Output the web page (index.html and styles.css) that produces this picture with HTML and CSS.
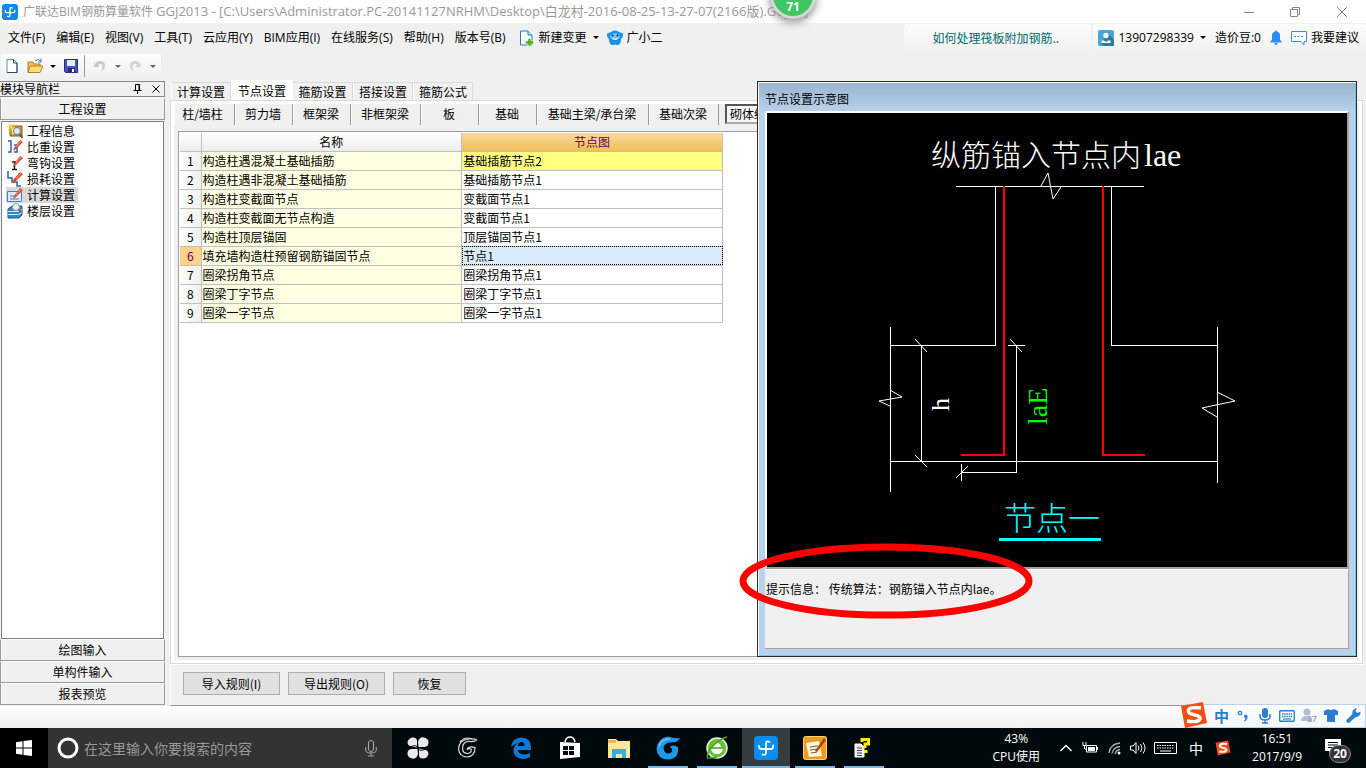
FILE: index.html
```html
<!DOCTYPE html>
<html lang="zh-CN">
<head>
<meta charset="utf-8">
<title>广联达BIM钢筋算量软件 GGJ2013</title>
<link rel="stylesheet" href="styles.css">
</head>
<body>
<header class="titlebar">
  <svg class="app-icon" viewBox="0 0 24 24"><rect width="24" height="24" rx="5" fill="#0a8bea"/><path d="M15.500 6Q12 4 12 8V16Q12 20 8.500 18.500M5 10Q4.500 13 8 13H16Q20 13 19 9.500" fill="none" stroke="#fff" stroke-width="2" stroke-linecap="round"/></svg>
  <h1 class="title">广联达BIM钢筋算量软件 <span>GGJ2013 - [C:\Users\Administrator.PC-20141127NRHM\Desktop\白龙村-2016-08-25-13-27-07(2166版).GGJ12]</span></h1>
  <div class="window-buttons">
    <button aria-label="最小化"><svg viewBox="0 0 10 10"><path d="M0 5.500H10"/></svg></button>
    <button aria-label="还原"><svg viewBox="0 0 10 10"><path d="M.5 2.500H7.500V9.500H.5ZM2.500 2.500V.5H9.500V7.500H7.500"/></svg></button>
    <button aria-label="关闭"><svg viewBox="0 0 10 10"><path d="M0 0L10 10M10 0L0 10"/></svg></button>
  </div>
  <span class="score">71</span>
</header>

<nav class="menubar">
  <button>文件(F)</button><button>编辑(E)</button><button>视图(V)</button><button>工具(T)</button><button>云应用(Y)</button><button>BIM应用(I)</button><button>在线服务(S)</button><button>帮助(H)</button><button>版本号(B)</button>
  <button class="with-icon"><svg class="i16" viewBox="0 0 16 16"><path d="M1.500 1H9l4 4v10H1.500Z" fill="#f6fbff" stroke="#2b79b9"/><path d="M9 1v4h4" fill="#cfe6f7" stroke="#2b79b9"/><path d="M9 8.500h3v2.500h2.500v3H12v2H9v-2H6.500v-3H9Z" fill="#4fb31c" stroke="#fff" stroke-width=".5"/></svg>新建变更<i class="caret"></i></button>
  <button class="with-icon"><svg class="i16" viewBox="0 0 16 16"><path d="M3 2.500Q8-1.500 13 2.500l3 1q.5 3.500-2 5.500.5 4-2.500 6H9.500L8 14.500 6.500 15h-2Q1.500 13 2 9-.5 7 0 3.500Z" fill="#1593e6"/><ellipse cx="8" cy="6.500" rx="5" ry="3.300" fill="#6fc6ff"/><circle cx="5.500" cy="5.500" r="1" fill="#124"/><circle cx="10.500" cy="5.500" r="1" fill="#124"/><path d="M5 8.500q3 2 6 0" stroke="#fff" fill="none"/></svg>广小二</button>
  <div class="help-link"><a href="#">如何处理筏板附加钢筋..</a></div>
  <div class="account">
    <button class="with-icon"><svg class="i16" viewBox="0 0 16 16"><rect width="16" height="16" rx="2" fill="#4aa5d3"/><path d="M10 3l6 7v6H6l-3-3Z" fill="#35779b"/><circle cx="8" cy="5.500" r="2.700" fill="#fff"/><path d="M3.500 13V10.500H6l2 1.500 2-1.500h2.500V13Z" fill="#fff"/></svg>13907298339<i class="caret"></i></button>
    <span>造价豆:0</span>
    <svg class="bell" viewBox="0 0 12 16"><path d="M6 0l1 1.500q3 .8 3 4v4l2 3H0l2-3v-4q0-3.200 3-4ZM4 13h4L6 15.500Z" fill="#2e8bf7"/></svg>
    <button class="with-icon"><svg class="i16" viewBox="0 0 16 16"><path d="M.5 1.500h15v10H13v3.500l-3-3.500H.5Z" fill="#fff" stroke="#2e8bf7"/><path d="M3 6.500h2m1.500 0h2m1.500 0h2" stroke="#2e8bf7"/></svg>我要建议</button>
  </div>
</nav>

<div class="toolbar">
  <div class="tools">
    <button aria-label="新建"><svg class="i16" viewBox="0 0 16 16"><path d="M3 1.500h6.500l3.500 3.500v9.500H3Z" fill="#fdfeff" stroke="#6f88a3"/><path d="M9.500 1.500V5H13v9.500H3" fill="none" stroke="#29476b"/></svg></button>
    <button class="with-caret" aria-label="打开"><svg class="i16" viewBox="0 0 16 16"><path d="M1 14V4h5l1 2h6v8Z" fill="#f3c54d" stroke="#a9802c"/><path d="M3 8h13l-3 6.500H1Z" fill="#ffdd75" stroke="#a9802c"/><path d="M8 3q3-3 6 0m0-2.500V4h-3" fill="none" stroke="#467aa8"/></svg><i class="caret"></i></button>
    <button aria-label="保存"><svg class="i16" viewBox="0 0 16 16"><path d="M1.500 1.500h13v13h-12l-1-1Z" fill="#4a51c8" stroke="#252c8c"/><path d="M4 2h8v6H4Z" fill="#e6edfa"/><path d="M5 10h7v4H5Z" fill="#252c66"/><path d="M9 11h2v3H9Z" fill="#fff"/></svg></button>
    <span class="divider"></span>
    <button class="with-caret dim" aria-label="撤销"><svg class="i16" viewBox="0 0 16 16"><path d="M3 7q1-4 5-4 5 0 5 4.500 0 4-4 6 2-3 1.500-5.500Q10 5.500 7.500 6L6 7l2 2H2V3Z" fill="#c9c9c9"/></svg><i class="caret"></i></button>
    <button class="with-caret dim" aria-label="恢复"><svg class="i16" viewBox="0 0 16 16"><path d="M13 7q-1-4-5-4-5 0-5 4.500 0 4 4 6-2-3-1.500-5.500Q6 5.500 8.500 6l1.500 1-2 2h6V3Z" fill="#d3d3d3"/></svg><i class="caret"></i></button>
  </div>
</div>

<main class="workspace">
  <aside class="sidebar">
    <div class="side-head"><span>模块导航栏</span>
      <button aria-label="固定"><svg viewBox="0 0 10 10"><path d="M2.500 6V.5h4V6M6 .5V6M.5 6.500h8M4.500 6.500V10" stroke="#000" fill="none"/></svg></button>
      <button aria-label="关闭"><svg viewBox="0 0 10 10"><path d="M1.500 1.500l7 7m0-7l-7 7" stroke="#000" fill="none"/></svg></button>
    </div>
    <button class="group">工程设置</button>
    <ul class="tree">
      <li><button><svg class="i16" viewBox="0 0 16 16"><path d="M3 3h12v10H3Z" fill="#d6a02d" stroke="#7d5a12"/><path d="M5 5h8v6H5Z" fill="#f5e3a9"/><path d="M4 0v8M0 4h8M1 1l6 6M7 1L1 7" stroke="#ffd83a"/><circle cx="10" cy="8" r="3.500" fill="#d9efff" stroke="#777"/><path d="M12.500 11l3 4" stroke="#654" stroke-width="2"/></svg>工程信息</button></li>
      <li><button><svg class="i16" viewBox="0 0 16 16"><path d="M1 2h3v11H1M7 6h3v7H7" fill="none" stroke="#2d65ad" stroke-width="1.500"/><path d="M7 9l6-8 3 2-7 7-3 2Z" fill="#e3452e"/><path d="M9 8l5-6" stroke="#ff9c80"/></svg>比重设置</button></li>
      <li><button><svg class="i16" viewBox="0 0 16 16"><path d="M5 7h5M7.500 7v7M5 14.500h5" stroke="#222" stroke-width="1.500"/><path d="M7 9l6-8 3 2-7 7-3 2Z" fill="#e3452e"/><path d="M9 8l5-6" stroke="#ff9c80"/></svg>弯钩设置</button></li>
      <li><button><svg class="i16" viewBox="0 0 16 16"><path d="M1 0v7h4v4h5v4h4" fill="none" stroke="#2d65ad" stroke-width="1.500"/><path d="M6 9l7-8 3 2-7 7-3 2Z" fill="#e3452e"/><path d="M9 8l5-6" stroke="#ff9c80"/></svg>损耗设置</button></li>
      <li><button class="selected"><svg class="i16" viewBox="0 0 16 16"><path d="M.5 4.500h14v10H.5Z" fill="#dceaff" stroke="#477fc4"/><path d="M3 9h4m-4 3h9" stroke="#477fc4"/><path d="M7 9l6-8 3 2-7 7-3 2Z" fill="#e3452e"/><path d="M9 8l5-6" stroke="#ff9c80"/></svg>计算设置</button></li>
      <li><button><svg class="i16" viewBox="0 0 16 16"><path d="M1 6l4-3h10v9l-3 3H1Z" fill="#2e87d0" stroke="#1b5f9f"/><path d="M1 8.500h11l3-2M1 11.500h11l3-2" stroke="#d8efff" fill="none"/><circle cx="9" cy="4" r="3.500" fill="#e2f0f8" stroke="#999"/><path d="M11.500 6.500l3 3" stroke="#765" stroke-width="2"/></svg>楼层设置</button></li>
    </ul>
    <button class="group">绘图输入</button>
    <button class="group">单构件输入</button>
    <button class="group">报表预览</button>
  </aside>

  <section class="content">
    <div class="tabs"><button>计算设置</button><button class="active">节点设置</button><button>箍筋设置</button><button>搭接设置</button><button>箍筋公式</button></div>
    <div class="page">
      <div class="subtabs"><button>柱/墙柱</button><button>剪力墙</button><button>框架梁</button><button>非框架梁</button><button>板</button><button>基础</button><button>基础主梁/承台梁</button><button>基础次梁</button><button class="active">砌体结构</button></div>
      <div class="grid-box">
        <table>
          <colgroup><col class="c-num"><col class="c-val"><col class="c-val"></colgroup>
          <thead><tr><th></th><th>名称</th><th class="hot">节点图</th></tr></thead>
          <tbody>
            <tr><th>1</th><td>构造柱遇混凝土基础插筋</td><td class="changed">基础插筋节点2</td></tr>
            <tr><th>2</th><td>构造柱遇非混凝土基础插筋</td><td>基础插筋节点1</td></tr>
            <tr><th>3</th><td>构造柱变截面节点</td><td>变截面节点1</td></tr>
            <tr><th>4</th><td>构造柱变截面无节点构造</td><td>变截面节点1</td></tr>
            <tr><th>5</th><td>构造柱顶层锚固</td><td>顶层锚固节点1</td></tr>
            <tr class="current"><th>6</th><td>填充墙构造柱预留钢筋锚固节点</td><td class="focus">节点1</td></tr>
            <tr><th>7</th><td>圈梁拐角节点</td><td>圈梁拐角节点1</td></tr>
            <tr><th>8</th><td>圈梁丁字节点</td><td>圈梁丁字节点1</td></tr>
            <tr><th>9</th><td>圈梁一字节点</td><td>圈梁一字节点1</td></tr>
          </tbody>
        </table>
      </div>
    </div>
    <div class="actions"><button>导入规则(I)</button><button>导出规则(O)</button><button class="narrow">恢复</button></div>
  </section>

  <section class="dialog" role="dialog" aria-labelledby="dlg-title">
    <h2 id="dlg-title">节点设置示意图</h2>
    <svg class="drawing" viewBox="767 113 580 454">
      <g fill="none" stroke="#fff" shape-rendering="crispEdges">
        <path d="M956 186.500H1144M995.500 186V345.500H890M1111.500 186V345.500H1217M890 461.500H1217M890.500 327V492M1217.500 327V483M921.500 345V461M1008 345.500H1025M1016.500 345V472.500H961M961.500 464V481"/>
      </g>
      <g fill="none" stroke="#fff">
        <path d="M1041 186l7-13 5 26 8-12M890 390l12 7-23 4 11 5M1217 392l18 9-33 7 15 9M915 339l12 13M915 455l12 12M1010 339l12 13M956 478l12-12"/>
      </g>
      <path d="M1004 186V455H961M1103 186V455H1145" fill="none" stroke="#f00" stroke-width="2" shape-rendering="crispEdges"/>
      <text class="cad" x="931" y="166" font-size="30" fill="#fff">纵筋锚入节点内<tspan class="cad-latin" x="1144" font-size="32">lae</tspan></text>
      <text class="cad-latin" transform="translate(949 411) rotate(-90)" font-size="26" fill="#fff">h</text>
      <text class="cad-latin" transform="translate(1047 425) rotate(-90)" font-size="28" fill="#0f0">laE</text>
      <text class="cad" x="1004" y="530" font-size="32" fill="#0ff">节点一</text>
      <path d="M999 539.500H1101" stroke="#0ff" stroke-width="3"/>
    </svg>
    <p class="hint">提示信息： 传统算法：钢筋锚入节点内lae。</p>
    <svg class="mark" viewBox="0 0 294 76"><ellipse cx="147" cy="38" rx="143" ry="34" fill="none" stroke="#f00" stroke-width="7"/></svg>
  </section>
</main>

<div class="statusbar">
  <div class="ime">
    <svg class="sogou" viewBox="0 0 28 28"><path d="M1 5L23 1l4 21L5 27Z" fill="#f04e14"/><path d="M21 7Q8 5 8.500 10.500c0 4 12 2.500 11.500 7Q19 22 7 20" fill="none" stroke="#fff" stroke-width="3.500"/></svg>
    <button>中</button>
    <button aria-label="标点"><svg class="i16" viewBox="0 0 16 16"><circle cx="5" cy="5" r="1.700" fill="none" stroke="#2b7fd1" stroke-width="1.300"/><path d="M9 8.500a1.800 1.800 0 113.500.5q0 3-3 4.500l-.5-.8q1.500-1 1.500-2.200Q9.500 10.500 9 8.500Z" fill="#2b7fd1"/></svg></button>
    <button aria-label="语音"><svg class="i16" viewBox="0 0 16 16"><rect x="5" y="0" width="6" height="10" rx="3" fill="#2b7fd1"/><path d="M3 6v2q0 4 5 4t5-4V6M8 12v3M5 15h6" stroke="#2b7fd1" stroke-width="1.500" fill="none"/></svg></button>
    <button aria-label="键盘"><svg class="i16" viewBox="0 0 16 16"><rect x=".7" y="2.700" width="14.600" height="10.600" rx="1" fill="#fff" stroke="#2b7fd1" stroke-width="1.400"/><path d="M3 6h10M3 8.500h10" stroke="#2b7fd1" stroke-width="1.500" stroke-dasharray="1.500 .7"/><path d="M4 11h8" stroke="#2b7fd1" stroke-width="1.200"/></svg></button>
    <button class="person" aria-label="用户"><svg class="i16" viewBox="0 0 16 16"><circle cx="6" cy="4" r="3.500" fill="#b4bdd3"/><path d="M0 13q0-5 6-5 4 0 5 2v3Z" fill="#b4bdd3"/></svg><small>17</small></button>
    <button aria-label="皮肤"><svg class="i16" viewBox="0 0 16 16"><path d="M1 3l4-2q3 2 6 0l4 2v4h-3v7H4V7H1Z" fill="#2b7fd1"/></svg></button>
    <button aria-label="工具"><svg class="i16" viewBox="0 0 16 16"><path d="M1.500 12l6-6q-1-4 3-5.500l1.500-.5-1.500 3 2 2 3-1.500q.5 5-5.500 6l-6 5.500q-3 .5-2.500-3Z" fill="#2b7fd1"/></svg></button>
  </div>
</div>

<footer class="taskbar">
  <button class="start" aria-label="开始"><svg class="i16" viewBox="0 0 16 16"><path d="M0 2.200L6.500 1.300V7.500H0ZM7.500 1.100L16 0V7.500H7.500ZM0 8.500H6.500V14.700L0 13.800ZM7.500 8.500H16V16L7.500 14.900Z" fill="#fff"/></svg></button>
  <label class="search"><svg class="ring" viewBox="0 0 22 22"><circle cx="11" cy="11" r="9" fill="none" stroke="#fff" stroke-width="3"/></svg><input type="text" placeholder="在这里输入你要搜索的内容" aria-label="搜索"><svg class="mic" viewBox="0 0 12 17"><path d="M3.500 3a2.500 2.500 0 015 0v6a2.500 2.500 0 01-5 0ZM.7 7v3q0 3 5.300 3t5.300-3V7M6 13v3M3 16h6" fill="none" stroke="#aaa"/></svg></label>
  <div class="apps">
    <button aria-label="应用"><svg viewBox="0 0 24 24"><path d="M11 11.500V5Q11 1.500 7 1.500T1.500 6Q1.500 10 6 10.500ZM12.500 11h6q4-.5 4-4.500T18 1.500 12 6ZM13 12.500V19q0 3.500 4 3.500t5.500-4.500q0-4-4.500-4.500ZM11.500 13H5q-3.500.5-3.500 4.500T6 22.500 12 18Z" fill="#e9e9e9"/><path d="M4 11q7-3 8 1 1 4 8 1" stroke="#000a0d" fill="none"/></svg></button>
    <button class="spaced" aria-label="浏览器"><svg viewBox="0 0 24 24"><path d="M22 4Q19 6 15 5.500 8 5 7.500 12q0 5.500 5 5.500 4.500-.5 3.500-4.500-3-1-4 1M22 4Q19.500 2.500 14 3 4 4 3.500 13q1 8 9 8 7.500-1 7.500-9.500-5-2-8 1.500M17 3Q10 0 5 6" fill="none" stroke="#ddd" stroke-width="1.200"/></svg></button>
    <button aria-label="Edge"><svg viewBox="0 0 24 24"><path d="M2 11Q3 2 12.500 1.500 22 2 22 11.500V14H9q.5 4.500 6 4.500 3 0 6-1.500v4q-3 2-7.500 2Q4 22 4.500 13.500 5 9 9.500 7q-4 .5-7.500 4Zm7-1h6.500q0-4-3-4T9 10Z" fill="#0a78d7"/></svg></button>
    <button aria-label="应用商店"><svg viewBox="0 0 24 24"><path d="M2 6l20 1v14l-20 2Z" fill="#fff"/><path d="M7 6Q8 1 12 1t5 5" fill="none" stroke="#fff" stroke-width="1.500"/><path d="M5 10l5 0v4H5Zm6 0h5v4h-5Zm-6 5h5v4H5Zm6 0h5v4h-5Z" fill="#000a0d"/></svg></button>
    <button aria-label="文件夹"><svg viewBox="0 0 24 24"><path d="M1 3h8l2 2h12v17H1Z" fill="#ffe79b"/><path d="M1 4h8v3H1Z" fill="#e9b64d"/><path d="M5 13h14v9h-4v-4H9v4H5Z" fill="#35afe0"/></svg></button>
    <button class="running" aria-label="浏览器"><svg viewBox="0 0 24 24"><path d="M24 2Q22 6.500 15 6.500 8 6.500 7.500 12q.5 5.500 5 5.500 4.500-.5 3.500-5l-2.500-1.500Q18 8 22 11.500 23 23 12 23.500 1 23 .5 12.500 2 2 12 .5q7 2.500 12 1.500Z" fill="#1c9bea"/><path d="M3 10Q5 3 14 3" fill="none" stroke="#6cc6ff" stroke-width="1.500"/></svg></button>
    <button class="running" aria-label="安全浏览器"><svg viewBox="0 0 24 24"><circle cx="12" cy="12" r="10" fill="#67bf3c" stroke="#e9ffe0" stroke-width="1.500"/><path d="M8 11q.5-4 4-4t4 4ZM6 13h12q-1 5-6 5t-6-5Z" fill="#fff"/><path d="M3 23Q0 17 10 8 17 2 22 1M4 22Q9 22 12 21" fill="none" stroke="#4ea52a" stroke-width="1.500"/></svg></button>
    <button class="running current" aria-label="广联达"><svg viewBox="0 0 24 24"><rect width="24" height="24" rx="4" fill="#098eee"/><path d="M15.500 6Q12 4 12 8V16Q12 20 8.500 18.500M5 10Q4.500 13 8 13H16Q20 13 19 9.500" fill="none" stroke="#fff" stroke-width="1.800" stroke-linecap="round"/></svg></button>
    <button class="running" aria-label="笔记"><svg viewBox="0 0 24 24"><rect x=".5" y=".5" width="23" height="23" rx="2" fill="#f19b1c" stroke="#ffd37b"/><path d="M3 7l13-2 3 15-13 1Z" fill="#fff6df"/><path d="M7 11l8-1M7 14l8-1M8 17l6-1" stroke="#7b552d"/><path d="M12 15L21 2l2 2-9 12Z" fill="#a8431b"/></svg></button>
    <button class="running" aria-label="帮助"><svg viewBox="0 0 24 24"><path d="M3 8h6l3 3v10H3Z" fill="#eee" stroke="#fff"/><path d="M5 12h5M5 14.500h5M5 17h5M5 19.500h5" stroke="#444"/><path d="M10 6V3.500h6.500V8H13v4M12 15.500h3.500" fill="none" stroke="#ffef00" stroke-width="3"/></svg></button>
  </div>
  <div class="cpu"><span>43%</span><span>CPU使用</span></div>
  <div class="tray">
    <svg viewBox="0 0 16 16"><path d="M2.500 11L8 5.500l5.500 5.500" fill="none" stroke="#fff" stroke-width="1.400"/></svg>
    <svg viewBox="0 0 16 16"><path d="M4.500 5.500h10v6.500h-10ZM15.500 7v3M1 2v3M4 2v3M.5 5.500h4M2.500 6v3h2" fill="none" stroke="#fff"/><path d="M6 7h7v4H6Z" fill="#fff"/></svg>
    <svg viewBox="0 0 16 16"><path d="M3 13Q4 4 14 3M6 13.500q1-6 8-7M9 14q1-4 5-4.500" fill="none" stroke="#aaa" stroke-width="1.300"/><circle cx="13" cy="13" r="1.500" fill="#fff"/></svg>
    <svg viewBox="0 0 16 16"><path d="M.5 6H3l3-3.500v11L3 10H.5ZM8 5.500q2 2.500 0 5M10.500 4q3 4 0 8M13 2.500q4 5.500 0 11" fill="none" stroke="#fff"/></svg>
    <svg class="kbd" viewBox="0 0 23 16"><path d="M.5 2.500h22v11H.5Z" fill="none" stroke="#fff"/><path d="M3 5.500h17M3 8h17" stroke="#fff" stroke-dasharray="1.500 1"/><path d="M6 11h11" stroke="#fff"/></svg>
    <span class="lang">中</span>
    <svg viewBox="0 0 28 28"><path d="M1 5L23 1l4 21L5 27Z" fill="#f04e14"/><path d="M21 7Q8 5 8.500 10.500c0 4 12 2.500 11.500 7Q19 22 7 20" fill="none" stroke="#fff" stroke-width="3.500"/></svg>
  </div>
  <div class="clock"><time>16:51</time><time>2017/9/9</time></div>
  <button class="notice" aria-label="通知"><svg class="i16" viewBox="0 0 16 16"><path d="M0 0h16v12H7l-3 3v-3H0Z" fill="#fff"/><path d="M3 3.500h10M3 6h10M3 8.500h6" stroke="#000"/></svg><span>20</span></button>
</footer>
</body>
</html>
```
FILE: styles.css
```css
* { box-sizing: border-box; }

body {
  margin: 0;
  height: 100vh;
  display: flex;
  flex-direction: column;
  overflow: hidden;
  background: #f0f0f0;
  color: #000;
  font: 12px/16px "Noto Sans CJK SC", sans-serif;
}

button {
  margin: 0;
  padding: 0;
  border: 0;
  background: none;
  color: inherit;
  font: inherit;
  white-space: nowrap;
}

svg { display: block; flex: none; }
h1, h2, p, ul { margin: 0; padding: 0; font-size: 12px; font-weight: 400; }
.i16 { width: 16px; height: 16px; }

.caret {
  width: 0;
  border: 3px solid transparent;
  border-top-color: #000;
  border-bottom: 0;
}

/* Title bar */
.titlebar {
  position: relative;
  z-index: 3;
  flex: none;
  display: flex;
  align-items: center;
  gap: 5px;
  height: 23px;
  padding-left: 2px;
  background: #fff;
  font-family: "Open Sans", "Noto Sans CJK SC", sans-serif;
}
.app-icon { width: 16px; height: 16px; }
.title { flex: 1; color: #999; white-space: nowrap; overflow: hidden; }
.title span { font-size: 13px; }
.window-buttons { display: flex; }
.window-buttons button { width: 46px; height: 22px; display: grid; place-items: center; }
.window-buttons button:last-child { width: 48px; }
.window-buttons svg { width: 10px; height: 10px; fill: none; stroke: #888; }
.score {
  position: absolute;
  left: 770px;
  top: -28px;
  width: 46px;
  height: 47px;
  padding-top: 25px;
  border: 3px solid #d5d9d5;
  border-radius: 50%;
  background: #3fc562;
  box-shadow: 0 3px 8px #888;
  color: #fff;
  font: 700 12px/14px "Open Sans", sans-serif;
  text-align: center;
}

/* Menu */
.menubar {
  flex: none;
  display: flex;
  align-items: center;
  gap: 11px;
  height: 29px;
  padding-left: 8px;
  font-family: "Open Sans", "Noto Sans CJK SC", sans-serif;
}
.with-icon { display: flex; align-items: center; gap: 4px; }
.menubar > .with-icon { margin-left: 2px; }
.with-icon .caret { margin-left: 2px; }
.menubar > .with-icon + .with-icon { margin-left: -3px; }
.help-link, .account {
  height: 28px;
  display: flex;
  align-items: center;
  border-radius: 3px;
  background: linear-gradient(#fdfdfd, #f0f0f0);
  white-space: nowrap;
}
.help-link { width: 187px; margin-left: auto; margin-right: -9px; padding-left: 28px; font-family: "Noto Sans CJK SC", sans-serif; }
.help-link a { color: #006b6b; text-decoration: none; }
.account { gap: 9px; padding: 0 7px 0 5px; }
.bell { width: 12px; height: 16px; }

/* Toolbar */
.toolbar { flex: none; height: 28px; padding: 2px 0 0 1px; }
.tools {
  width: 160px;
  height: 24px;
  display: flex;
  align-items: center;
  padding-left: 3px;
  gap: 7px;
  border-radius: 2px;
  background: linear-gradient(#fdfdfd, #f0f0f0);
}
.with-caret { display: flex; align-items: center; gap: 7px; }
.divider { width: 1px; height: 22px; margin-left: -2px; background: #999; }
.dim .caret { border-top-color: #666; }
.dim + .dim { margin-left: -1px; }

/* Workspace */
.workspace { position: relative; flex: 1; min-height: 0; display: flex; gap: 5px; }

.sidebar { width: 165px; display: flex; flex-direction: column; padding: 1px 0; }
.side-head {
  display: flex;
  align-items: center;
  gap: 8px;
  height: 16px;
  margin-bottom: 1px;
  padding-right: 3px;
  border: 1px solid #888;
  border-left: 0;
  line-height: 12px;
}
.side-head span { flex: 1; }
.side-head svg { width: 10px; height: 10px; }
.group {
  flex: none;
  height: 22px;
  border: 1px solid #999;
  border-top-color: #fff;
  box-shadow: inset 1px 0 #fff;
  line-height: 18px;
}
.tree {
  flex: 1;
  margin: 1px 1px 0;
  padding: 1px 4px;
  border: 1px solid #7b7f88;
  background: #fff;
  list-style: none;
}
.tree button { display: flex; gap: 4px; height: 16px; padding: 0 3px 0 1px; line-height: 16px; }
.tree .selected { background: #d9d9d9; }

.content { flex: 1; min-width: 0; display: flex; flex-direction: column; padding-right: 3px; }
.tabs { display: flex; align-items: flex-end; height: 20px; padding-left: 1px; }
.tabs button { width: 60px; height: 18px; border: 1px solid #dadada; border-bottom: 0; border-left-color: #fff; line-height: 17px; }
.tabs .active { width: 62px; height: 21px; margin: 0 -1px -1px 0; border: 0; background: #fff; }
.tabs .active + button { width: 61px; }
.page {
  flex: 1;
  display: flex;
  flex-direction: column;
  min-height: 0;
  padding: 0 3px 6px;
  border: 1px solid #dadada;
  box-shadow: inset 0 0 0 3px #fff;
}
.subtabs {
  display: grid;
  grid-template-columns: 61px 58px 58px 70px 58px 58px 112px 70px 64px;
  height: 30px;
  padding: 3px 0 6px;
}
.subtabs button { padding: 0 2px 2px 0; border-right: 1px solid #999; border-left: 1px solid #fff; }
.subtabs button:first-child { padding-right: 4px; }
.subtabs .active {
  margin: 0 0 1px 6px;
  padding: 0;
  border: 2px inset #aaa;
  background: #f8f8f8;
}
.grid-box { flex: 1; margin: 0 4px; padding: 1px; border: 1px solid #a0a0a0; background: #fff; }

table { width: 543px; border-collapse: collapse; table-layout: fixed; }
.c-num { width: 21px; }
th, td { height: 19px; padding: 0 1px; border: 1px solid #c0c0c0; line-height: 16px; font-weight: 400; white-space: nowrap; }
thead th { height: 18px; border-top: 0; background: linear-gradient(#fff, #ececec); }
thead .hot { background: linear-gradient(#f9d99f, #f1be5a); color: #600060; }
tbody th { border-left: 0; background: linear-gradient(90deg, #fff, #efefef); }
th:first-child { border-left: 0; }
td:nth-child(2) { background: #ffffe1; }
td.changed { background: #ffff80; }
td.focus { background: #d9eaf9; outline: 1px dotted #000; outline-offset: -1px; }
.current th { background: #ffd28a; color: #600060; }

.actions {
  flex: none;
  display: flex;
  gap: 8px;
  height: 42px;
  padding: 7px 12px;
  border-top: 1px solid #fff;
  border-left: 1px solid #fff;
  border-bottom: 1px solid #999;
}
.actions button { width: 97px; height: 23px; border: 1px solid #adadad; background: #e1e1e1; }
.actions .narrow { width: 73px; }

/* Diagram window */
.dialog {
  position: absolute;
  top: 1px;
  right: 9px;
  width: 600px;
  padding: 1px 7px 7px;
  border: 1px solid #2b2b2b;
  background: linear-gradient(#99b4d1, #b9d1ea 30px);
  box-shadow: inset 1px 1px #fff, inset -1px -1px #5fd0e8;
}
.dialog h2 { height: 28px; padding-top: 8px; line-height: 16px; }
.drawing {
  width: 100%;
  border: 2px solid #fff;
  border-right-color: #a0a0a0;
  border-bottom-color: #a0a0a0;
  background: #000;
}
.cad { font-family: "Noto Sans CJK SC", sans-serif; font-weight: 300; }
.cad-latin { font-family: "Liberation Serif", serif; }
.hint {
  height: 80px;
  padding: 11px 1px;
  border: 1px solid #a0a0a0;
  border-top-color: #fff;
  border-left: 0;
  background: #f0f0f0;
}
.mark { position: absolute; left: -19px; top: 461px; width: 294px; height: 76px; }

/* Status strip and input method bar */
.statusbar {
  position: relative;
  flex: none;
  display: flex;
  justify-content: flex-end;
  height: 22px;
  background: linear-gradient(#fff, #f0f0f0);
}
.ime {
  display: flex;
  align-items: center;
  gap: 6px;
  height: 24px;
  margin-top: -2px;
  padding-right: 4px;
  border: 1px solid #b5d3ec;
  background: linear-gradient(#fff, #f4f6fa);
  color: #2b7fd1;
}
.ime button { font-size: 15px; font-weight: 700; line-height: 20px; }
.sogou { width: 28px; height: 28px; margin: -3px 0 0 -6px; }
.person { display: flex; align-items: flex-end; }
.person small { margin-left: -10px; color: #9ba6c2; font: 700 9px/9px "Liberation Sans", sans-serif; }

/* Taskbar */
.taskbar {
  flex: none;
  display: flex;
  height: 40px;
  background: #000a0d;
  color: #fff;
  font-family: "Open Sans", "Noto Sans CJK SC", sans-serif;
}
.start { width: 48px; display: grid; place-items: center; background: #000; }
.search { width: 344px; display: flex; align-items: center; gap: 5px; padding: 0 15px 0 9px; background: #333; }
.ring { width: 22px; height: 22px; }
.search input {
  flex: 1;
  min-width: 0;
  padding: 0;
  border: 0;
  outline: 0;
  background: none;
  color: #fff;
  font: 14px/20px "Noto Sans CJK SC", sans-serif;
}
.search input::placeholder { color: #999; opacity: 1; }
.mic { width: 12px; height: 17px; }
.apps { display: flex; gap: 1px; padding-left: 2px; }
.apps button { width: 48px; padding: 0 4px; background-clip: content-box; }
.apps .spaced { margin-right: 5px; }
.apps svg { width: 24px; height: 24px; margin: 0 auto; }
.running { box-shadow: none; }
.apps .running { background: linear-gradient(#76b9ed, #76b9ed) bottom / 100% 2px no-repeat content-box; }
.apps .current { background: linear-gradient(#76b9ed, #76b9ed) bottom / 100% 2px no-repeat #343d40; }
.cpu, .clock { display: flex; flex-direction: column; align-items: center; padding-top: 2px; line-height: 18px; }
.cpu { margin-left: auto; }
.tray { display: flex; align-items: center; gap: 8px; padding: 0 21px 0 18px; }
.tray svg { width: 16px; height: 16px; }
.tray .kbd { width: 23px; }
.lang { margin: 0 4px; font: 14px/20px "Noto Sans CJK SC", sans-serif; }
.notice { position: relative; width: 64px; padding: 0 0 2px 23px; }
.notice span {
  position: absolute;
  left: 27px;
  top: 17px;
  width: 22px;
  height: 18px;
  border: 1px solid #888;
  border-radius: 9px;
  background: #333;
  font: 700 12px/16px "Open Sans", sans-serif;
  text-align: center;
}
```
